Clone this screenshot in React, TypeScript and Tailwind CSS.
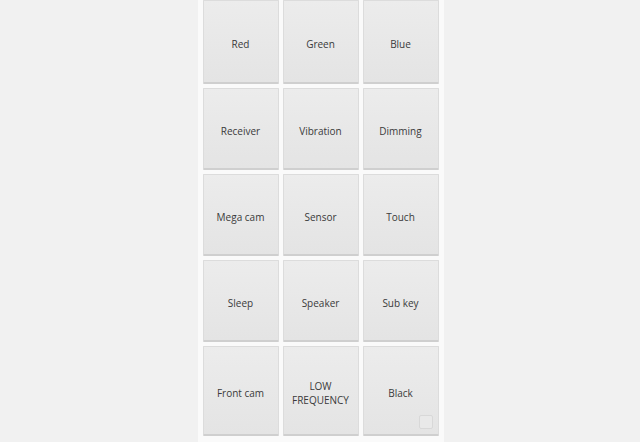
const rows: { label: string; h: string }[][] = [
  [
    { label: 'Red', h: 'h-[84px]' },
    { label: 'Green', h: 'h-[84px]' },
    { label: 'Blue', h: 'h-[84px]' },
  ],
  [
    { label: 'Receiver', h: 'h-[82px]' },
    { label: 'Vibration', h: 'h-[82px]' },
    { label: 'Dimming', h: 'h-[82px]' },
  ],
  [
    { label: 'Mega cam', h: 'h-[82px]' },
    { label: 'Sensor', h: 'h-[82px]' },
    { label: 'Touch', h: 'h-[82px]' },
  ],
  [
    { label: 'Sleep', h: 'h-[82px]' },
    { label: 'Speaker', h: 'h-[82px]' },
    { label: 'Sub key', h: 'h-[82px]' },
  ],
  [
    { label: 'Front cam', h: 'h-[90px]' },
    { label: 'LOW\nFREQUENCY', h: 'h-[90px]' },
    { label: 'Black', h: 'h-[90px]' },
  ],
];

function Tile({ label, h }: { label: string; h: string }) {
  return (
    <button
      className={`${h} relative w-[76px] flex items-center justify-center pt-[4px] text-center whitespace-pre-line leading-[14px] text-[10px] text-[#3a3a3a] bg-gradient-to-b from-[#ececec] to-[#e4e4e4] border border-[#dcdcdc] border-b-2 border-b-[#cfcfcf] rounded-[1px]`}
    >
      {label}
      {label === 'Black' && (
        <span className="absolute right-[5px] bottom-[5px] w-[14px] h-[14px] border border-[#d8d8d8] rounded-[2px] bg-[#e9e9e9]" />
      )}
    </button>
  );
}

export default function App() {
  return (
    <div className="w-[640px] h-[442px] overflow-hidden bg-[#f1f1f1] flex justify-center" style={{ fontFamily: '"Open Sans", "Noto Sans", sans-serif' }}>
      <div className="w-[246px] h-full bg-[#fafafa] px-[5px] flex flex-col gap-[4px] ml-[1px]">
        {rows.map((row, i) => (
          <div key={i} className="flex gap-[4px]">
            {row.map((t) => (
              <Tile key={t.label} label={t.label} h={t.h} />
            ))}
          </div>
        ))}
      </div>
    </div>
  );
}
